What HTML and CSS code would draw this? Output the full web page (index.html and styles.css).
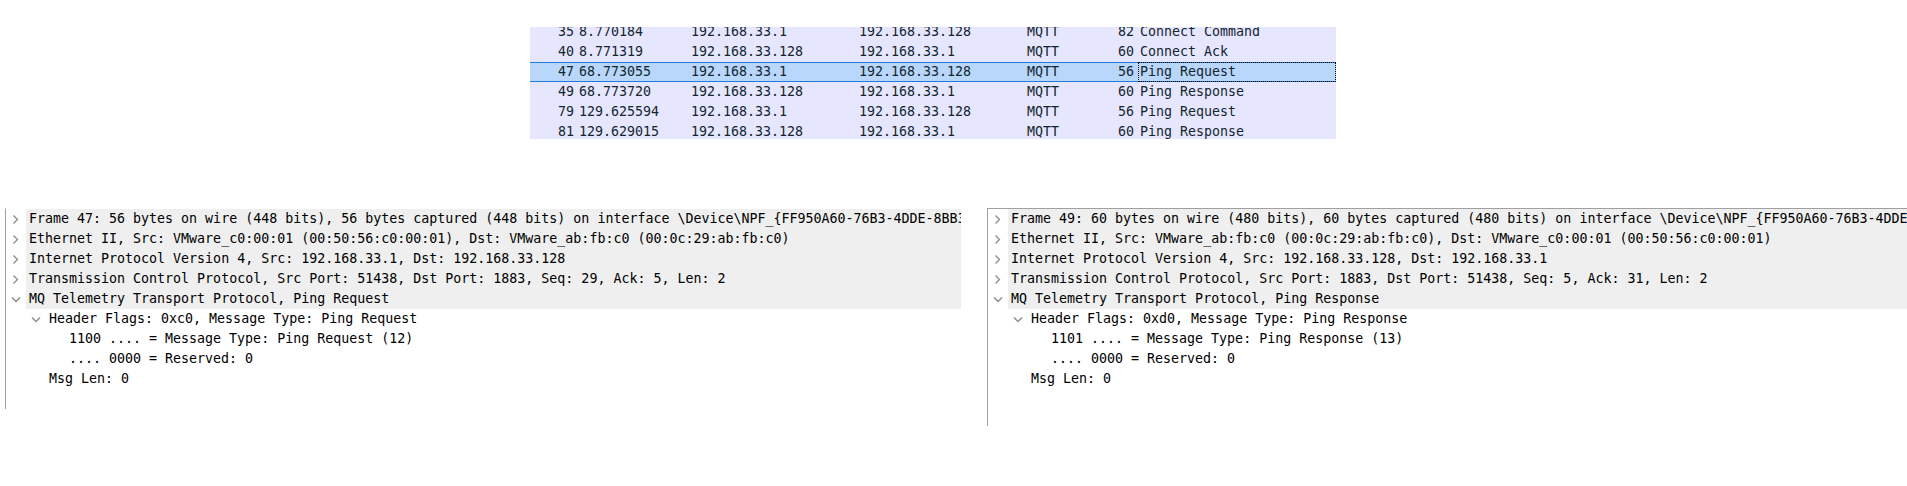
FILE: index.html
```html
<!DOCTYPE html>
<html>
<head>
<meta charset="utf-8">
<link rel="stylesheet" href="styles.css">
</head>
<body>
<div class="packet-list-wrap">
  <div class="packet-list">
    <div class="pkt"><span class="c-no">35</span><span class="c-time">8.770184</span><span class="c-src">192.168.33.1</span><span class="c-dst">192.168.33.128</span><span class="c-proto">MQTT</span><span class="c-len">82</span><span class="c-info">Connect Command</span></div>
    <div class="pkt"><span class="c-no">40</span><span class="c-time">8.771319</span><span class="c-src">192.168.33.128</span><span class="c-dst">192.168.33.1</span><span class="c-proto">MQTT</span><span class="c-len">60</span><span class="c-info">Connect Ack</span></div>
    <div class="pkt selected"><span class="c-no">47</span><span class="c-time">68.773055</span><span class="c-src">192.168.33.1</span><span class="c-dst">192.168.33.128</span><span class="c-proto">MQTT</span><span class="c-len">56</span><span class="c-info focus">Ping Request</span></div>
    <div class="pkt"><span class="c-no">49</span><span class="c-time">68.773720</span><span class="c-src">192.168.33.128</span><span class="c-dst">192.168.33.1</span><span class="c-proto">MQTT</span><span class="c-len">60</span><span class="c-info">Ping Response</span></div>
    <div class="pkt"><span class="c-no">79</span><span class="c-time">129.625594</span><span class="c-src">192.168.33.1</span><span class="c-dst">192.168.33.128</span><span class="c-proto">MQTT</span><span class="c-len">56</span><span class="c-info">Ping Request</span></div>
    <div class="pkt"><span class="c-no">81</span><span class="c-time">129.629015</span><span class="c-src">192.168.33.128</span><span class="c-dst">192.168.33.1</span><span class="c-proto">MQTT</span><span class="c-len">60</span><span class="c-info">Ping Response</span></div>
  </div>
</div>

<div class="details-area">
  <div class="tree tree-left">
    <div class="trow top"><span class="arrow"><svg width="20" height="20" viewBox="0 0 20 20"><polyline class="chev" points="7.5,6.5 11.5,10.5 7.5,14.5"/></svg></span><span class="label">Frame 47: 56 bytes on wire (448 bits), 56 bytes captured (448 bits) on interface \Device\NPF_{FF950A60-76B3-4DDE-8BB3</span></div>
    <div class="trow top"><span class="arrow"><svg width="20" height="20" viewBox="0 0 20 20"><polyline class="chev" points="7.5,6.5 11.5,10.5 7.5,14.5"/></svg></span><span class="label">Ethernet II, Src: VMware_c0:00:01 (00:50:56:c0:00:01), Dst: VMware_ab:fb:c0 (00:0c:29:ab:fb:c0)</span></div>
    <div class="trow top"><span class="arrow"><svg width="20" height="20" viewBox="0 0 20 20"><polyline class="chev" points="7.5,6.5 11.5,10.5 7.5,14.5"/></svg></span><span class="label">Internet Protocol Version 4, Src: 192.168.33.1, Dst: 192.168.33.128</span></div>
    <div class="trow top"><span class="arrow"><svg width="20" height="20" viewBox="0 0 20 20"><polyline class="chev" points="7.5,6.5 11.5,10.5 7.5,14.5"/></svg></span><span class="label">Transmission Control Protocol, Src Port: 51438, Dst Port: 1883, Seq: 29, Ack: 5, Len: 2</span></div>
    <div class="trow top"><span class="arrow"><svg width="20" height="20" viewBox="0 0 20 20"><polyline class="chev" points="6,8.5 10,12.5 14,8.5"/></svg></span><span class="label">MQ Telemetry Transport Protocol, Ping Request</span></div>
    <div class="trow lvl1"><span class="arrow"><svg width="20" height="20" viewBox="0 0 20 20"><polyline class="chev" points="6,8.5 10,12.5 14,8.5"/></svg></span><span class="label">Header Flags: 0xc0, Message Type: Ping Request</span></div>
    <div class="trow lvl2"><span class="arrow"></span><span class="label">1100 .... = Message Type: Ping Request (12)</span></div>
    <div class="trow lvl2"><span class="arrow"></span><span class="label">.... 0000 = Reserved: 0</span></div>
    <div class="trow lvl1"><span class="arrow"></span><span class="label">Msg Len: 0</span></div>
  </div>

  <div class="tree tree-right">
    <div class="trow top"><span class="arrow"><svg width="20" height="20" viewBox="0 0 20 20"><polyline class="chev" points="7.5,6.5 11.5,10.5 7.5,14.5"/></svg></span><span class="label">Frame 49: 60 bytes on wire (480 bits), 60 bytes captured (480 bits) on interface \Device\NPF_{FF950A60-76B3-4DDE-8BB3</span></div>
    <div class="trow top"><span class="arrow"><svg width="20" height="20" viewBox="0 0 20 20"><polyline class="chev" points="7.5,6.5 11.5,10.5 7.5,14.5"/></svg></span><span class="label">Ethernet II, Src: VMware_ab:fb:c0 (00:0c:29:ab:fb:c0), Dst: VMware_c0:00:01 (00:50:56:c0:00:01)</span></div>
    <div class="trow top"><span class="arrow"><svg width="20" height="20" viewBox="0 0 20 20"><polyline class="chev" points="7.5,6.5 11.5,10.5 7.5,14.5"/></svg></span><span class="label">Internet Protocol Version 4, Src: 192.168.33.128, Dst: 192.168.33.1</span></div>
    <div class="trow top"><span class="arrow"><svg width="20" height="20" viewBox="0 0 20 20"><polyline class="chev" points="7.5,6.5 11.5,10.5 7.5,14.5"/></svg></span><span class="label">Transmission Control Protocol, Src Port: 1883, Dst Port: 51438, Seq: 5, Ack: 31, Len: 2</span></div>
    <div class="trow top"><span class="arrow"><svg width="20" height="20" viewBox="0 0 20 20"><polyline class="chev" points="6,8.5 10,12.5 14,8.5"/></svg></span><span class="label">MQ Telemetry Transport Protocol, Ping Response</span></div>
    <div class="trow lvl1"><span class="arrow"><svg width="20" height="20" viewBox="0 0 20 20"><polyline class="chev" points="6,8.5 10,12.5 14,8.5"/></svg></span><span class="label">Header Flags: 0xd0, Message Type: Ping Response</span></div>
    <div class="trow lvl2"><span class="arrow"></span><span class="label">1101 .... = Message Type: Ping Response (13)</span></div>
    <div class="trow lvl2"><span class="arrow"></span><span class="label">.... 0000 = Reserved: 0</span></div>
    <div class="trow lvl1"><span class="arrow"></span><span class="label">Msg Len: 0</span></div>
  </div>
</div>
</body>
</html>
```

FILE: styles.css
```css
html, body {
  margin: 0;
  padding: 0;
  background: #ffffff;
}
body {
  width: 1907px;
  height: 486px;
  overflow: hidden;
  font-family: "DejaVu Sans Mono", "Liberation Mono", monospace;
  font-size: 13.3px;
  color: #000000;
}

/* ---------- packet list ---------- */
.packet-list-wrap {
  margin: 27px 0 0 530px;
  width: 806px;
  height: 112px;
  overflow: hidden;
  background: #e7e6ff;
}
.packet-list {
  margin-top: -5px;
}
.pkt {
  display: flex;
  height: 20px;
  line-height: 20px;
  white-space: nowrap;
  color: #12272e;
  background: #e7e6ff;
}
.pkt.selected {
  background: #b9d6fb;
  box-shadow: inset 0 1px 0 #1f7ad8, inset 0 -1px 0 #1f7ad8;
}
.c-no {
  flex: none;
  width: 44px;
  text-align: right;
}
.c-time {
  flex: none;
  width: 112px;
  padding-left: 5px;
}
.c-src {
  flex: none;
  width: 168px;
}
.c-dst {
  flex: none;
  width: 168px;
}
.c-proto {
  flex: none;
  width: 60px;
}
.c-len {
  flex: none;
  width: 47px;
  padding-right: 4px;
  text-align: right;
}
.c-info {
  flex: 1 1 auto;
  padding-left: 2px;
  height: 20px;
}
.c-info.focus {
  outline: 1px dotted #000000;
  outline-offset: -1px;
}

/* ---------- detail trees ---------- */
.details-area {
  display: flex;
  margin-top: 69px;
}
.tree {
  height: 200px;
  overflow: hidden;
  border-left: 1px solid #a0a0a0;
  border-top: 1px solid transparent;
}
.tree-left {
  flex: none;
  margin-left: 5px;
  width: 955px;
}
.tree-right {
  flex: 1 1 auto;
  min-width: 0;
  margin-left: 26px;
  height: 217px;
  border-top-color: #a0a0a0;
}
.trow {
  display: flex;
  height: 20px;
  line-height: 20px;
  white-space: nowrap;
}
.trow.lvl1 {
  padding-left: 20px;
}
.trow.lvl2 {
  padding-left: 40px;
}
.arrow {
  flex: none;
  width: 20px;
  height: 20px;
}
.arrow svg {
  display: block;
}
.chev {
  fill: none;
  stroke: #8a8a8a;
  stroke-width: 1.3;
}
.label {
  flex: 1 0 auto;
  padding-left: 3px;
}
.trow.top .label {
  background: #efefef;
}
```
